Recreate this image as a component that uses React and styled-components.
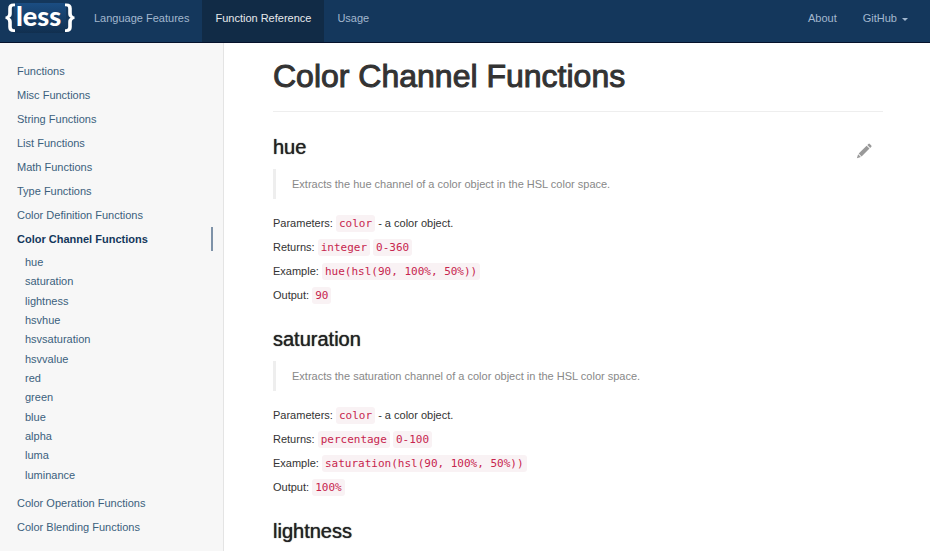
import React from "react";
import styled, { createGlobalStyle } from "styled-components";

const GlobalStyle = createGlobalStyle`
  *, *::before, *::after { box-sizing: border-box; }
  html, body, #root { height: 100%; }
  body {
    margin: 0;
    background: #fff;
    color: #333;
    font: 11px/16px "Liberation Sans", Arial, sans-serif;
    overflow: hidden;
  }
  h1, h2, p, ul, blockquote { margin: 0; padding: 0; }
  ul { list-style: none; }
  a { color: inherit; text-decoration: none; }
`;

const Page = styled.div`
  display: flex;
  flex-direction: column;
  min-height: 100vh;
`;

const NavBar = styled.header`
  display: flex;
  flex: none;
  height: 43px;
  padding: 0 9px 0 5px;
  background: #14375c;
  border-bottom: 1px solid #06122c;
`;

const Brand = styled.a`
  width: 76px;
  svg { display: block; }
`;

const NavGroup = styled.nav`
  display: flex;
  margin-left: ${(p) => (p.$end ? "auto" : "0")};
`;

const NavLink = styled.a`
  display: flex;
  align-items: center;
  padding: 0 13px 6px;
  color: ${(p) => (p.$active ? "#e6e9ec" : "#a3b8cf")};
  background: ${(p) => (p.$active ? "#112b46" : "transparent")};
`;

const MenuButton = styled.button`
  display: flex;
  align-items: center;
  gap: 5px;
  padding: 0 13px 6px;
  border: 0;
  background: none;
  color: #a3b8cf;
  font: inherit;
`;

const Caret = styled.span`
  margin-top: 3px;
  border: 3px solid transparent;
  border-top-color: currentColor;
  border-bottom: 0;
`;

const Body = styled.div`
  display: flex;
  flex: 1;
`;

const Sidebar = styled.nav`
  flex: none;
  width: 224px;
  padding: 16px 10px 0 17px;
  background: #f7f7f7;
  border-right: 1px solid #e4e4e4;
  color: #3b5f7d;
`;

const SideLink = styled.a`
  display: block;
  line-height: 24px;
  font-weight: ${(p) => (p.$active ? 700 : 400)};
  color: ${(p) => (p.$active ? "#14375c" : "inherit")};
  border-right: 2px solid ${(p) => (p.$active ? "#7e92a8" : "transparent")};
`;

const SubList = styled.ul`
  display: grid;
  grid-auto-rows: 1fr;
  min-height: 232px;
  margin: 2px 0 6px;
  padding-left: 8px;
`;

const SubLink = styled.a`
  display: block;
  line-height: 19px;
`;

const Content = styled.main`
  flex: 1;
  min-width: 0;
  padding: 13px 47px 0 49px;
`;

const Title = styled.h1`
  padding-bottom: 15px;
  border-bottom: 1px solid #eee;
  color: #333;
  font-size: 32px;
  font-weight: 400;
  line-height: 40px;
  -webkit-text-stroke: 1px currentColor;
`;

const Section = styled.section`
  padding-top: 23px;
  & + & { padding-top: 20px; }
`;

const SectionHead = styled.div`
  display: flex;
  align-items: center;
  justify-content: space-between;
  height: 24px;
  margin-bottom: 10px;
  padding-right: 11px;
`;

const Heading = styled.h2`
  color: #222;
  font-size: 20px;
  font-weight: 400;
  line-height: 24px;
  text-shadow: 0 0 1px currentColor;
`;

const EditLink = styled.a`
  padding-top: 8px;
  svg { display: block; }
`;

const Quote = styled.blockquote`
  margin-bottom: 12px;
  padding: 7px 16px;
  border-left: 3px solid #eee;
  color: #888;
`;

const Line = styled.p`
  color: #333;
  line-height: 24px;
`;

const Code = styled.code`
  padding: 2px 3px;
  border-radius: 3px;
  background: #f9f2f4;
  color: #c7254e;
  font: 11px "DejaVu Sans Mono", monospace;
`;

function Logo() {
  return (
    <svg width="72" height="38" viewBox="0 0 72 38" role="img" aria-label="less">
      <defs>
        <linearGradient id="plate" x1="0" y1="0" x2="0" y2="1">
          <stop offset="0" stopColor="#1b4d82" />
          <stop offset="1" stopColor="#112f4f" />
        </linearGradient>
      </defs>
      <rect x="9" y="3" width="52" height="30" rx="3" fill="url(#plate)" />
      <text x="11" y="26" fill="#fff" fontFamily="Lato, sans-serif" fontWeight="900" fontSize="27">less</text>
      <g fill="#fff">
        <path id="brace" d="M10 3.500H8.500C5 3.500 3.200 5.300 3.200 8.500V13C3.200 15.200 2.300 16.200 .5 16.500V19C2.300 19.300 3.200 20.300 3.200 22.500V27C3.200 30.200 5 32 8.500 32H10V29.200H9C7.500 29.200 6.800 28.500 6.800 26.800V22C6.800 19.800 6 18.400 4.400 17.750C6 17.100 6.800 15.700 6.800 13.500V8.700C6.800 7 7.500 6.300 9 6.300H10Z" />
        <use href="#brace" transform="matrix(-1 0 0 1 70 0)" />
      </g>
    </svg>
  );
}

function Pencil() {
  return (
    <svg width="16" height="16" viewBox="0 0 16 16" fill="#999" aria-hidden="true">
      <path d="M12.4 .9a1 1 0 0 1 1.400 0l1.500 1.500a1 1 0 0 1 0 1.400L14.200 4.900 11.300 2zM10.600 2.700l2.900 2.900-7.900 7.900-2.900-2.900zM2.100 11.300 4.900 14.100 .9 15.300z" />
    </svg>
  );
}

const topLinks = ["Functions", "Misc Functions", "String Functions", "List Functions", "Math Functions", "Type Functions", "Color Definition Functions", "Color Channel Functions", "Color Operation Functions", "Color Blending Functions"];
const current = "Color Channel Functions";
const subLinks = ["hue", "saturation", "lightness", "hsvhue", "hsvsaturation", "hsvvalue", "red", "green", "blue", "alpha", "luma", "luminance"];

const sections = [
  { name: "hue", editable: true, type: "integer", range: "0-360", example: "hue(hsl(90, 100%, 50%))", output: "90" },
  { name: "saturation", type: "percentage", range: "0-100", example: "saturation(hsl(90, 100%, 50%))", output: "100%" },
  { name: "lightness" },
];

export default function App() {
  return (
    <Page>
      <GlobalStyle />
      <NavBar>
        <Brand href="#top"><Logo /></Brand>
        <NavGroup>
          <NavLink href="#features">Language Features</NavLink>
          <NavLink href="#functions" $active>Function Reference</NavLink>
          <NavLink href="#usage">Usage</NavLink>
        </NavGroup>
        <NavGroup $end>
          <NavLink href="#about">About</NavLink>
          <MenuButton type="button">GitHub <Caret /></MenuButton>
        </NavGroup>
      </NavBar>
      <Body>
        <Sidebar>
          <ul>
            {topLinks.map((label) => (
              <li key={label}>
                <SideLink href="#top" $active={label === current}>{label}</SideLink>
                {label === current && (
                  <SubList>
                    {subLinks.map((s) => (
                      <li key={s}><SubLink href={"#" + s}>{s}</SubLink></li>
                    ))}
                  </SubList>
                )}
              </li>
            ))}
          </ul>
        </Sidebar>
        <Content>
          <Title>Color Channel Functions</Title>
          {sections.map((s) => (
            <Section key={s.name} id={s.name}>
              <SectionHead>
                <Heading>{s.name}</Heading>
                {s.editable && <EditLink href="#edit" aria-label="Edit"><Pencil /></EditLink>}
              </SectionHead>
              {s.example && (
                <>
                  <Quote>Extracts the {s.name} channel of a color object in the HSL color space.</Quote>
                  <Line>Parameters: <Code>color</Code> - a color object.</Line>
                  <Line>Returns: <Code>{s.type}</Code> <Code>{s.range}</Code></Line>
                  <Line>Example: <Code>{s.example}</Code></Line>
                  <Line>Output: <Code>{s.output}</Code></Line>
                </>
              )}
            </Section>
          ))}
        </Content>
      </Body>
    </Page>
  );
}
